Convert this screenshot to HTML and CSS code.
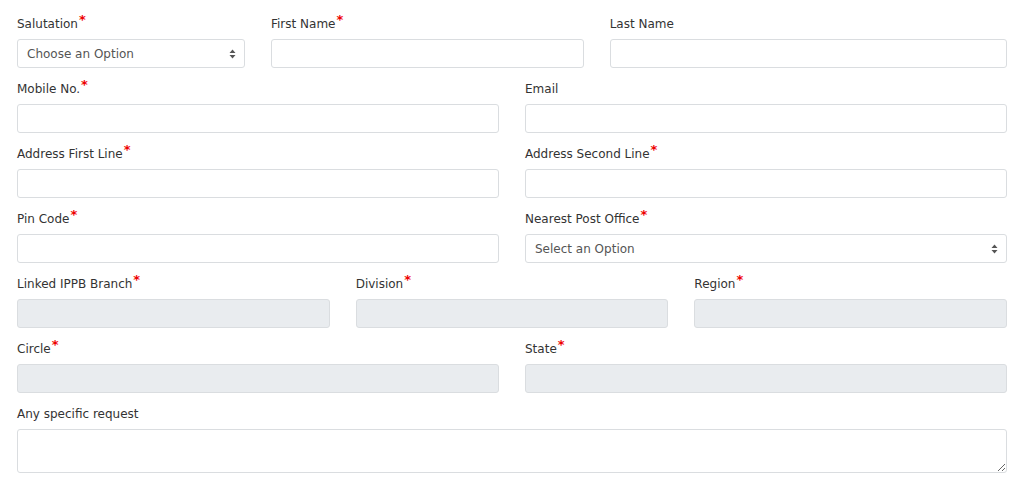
FILE: index.html
```html
<!DOCTYPE html>
<html lang="en">
<head>
  <meta charset="UTF-8">
  <meta name="viewport" content="width=device-width, initial-scale=1.0">
  <title>Service Request</title>
  <link rel="stylesheet" href="styles.css">
</head>
<body>
  <form class="request-form">
    <div class="row">
      <div class="field span-3">
        <label for="salutation">Salutation<span class="req">*</span></label>
        <div class="select-wrap">
          <select id="salutation">
            <option>Choose an Option</option>
            <option>Mr.</option>
            <option>Ms.</option>
            <option>Mrs.</option>
          </select>
          <svg class="caret" width="7" height="10" viewBox="0 0 7 10"><path d="M3.5 0.5 L6.5 4 H0.5 Z M3.5 9.5 L6.5 6 H0.5 Z" fill="#555"/></svg>
        </div>
      </div>
      <div class="field span-4">
        <label for="firstName">First Name<span class="req">*</span></label>
        <input type="text" id="firstName">
      </div>
      <div class="field span-5">
        <label for="lastName">Last Name</label>
        <input type="text" id="lastName">
      </div>
    </div>

    <div class="row">
      <div class="field span-6">
        <label for="mobile">Mobile No.<span class="req">*</span></label>
        <input type="text" id="mobile">
      </div>
      <div class="field span-6">
        <label for="email">Email</label>
        <input type="email" id="email">
      </div>
    </div>

    <div class="row">
      <div class="field span-6">
        <label for="address1">Address First Line<span class="req">*</span></label>
        <input type="text" id="address1">
      </div>
      <div class="field span-6">
        <label for="address2">Address Second Line<span class="req">*</span></label>
        <input type="text" id="address2">
      </div>
    </div>

    <div class="row">
      <div class="field span-6">
        <label for="pincode">Pin Code<span class="req">*</span></label>
        <input type="text" id="pincode">
      </div>
      <div class="field span-6">
        <label for="postOffice">Nearest Post Office<span class="req">*</span></label>
        <div class="select-wrap">
          <select id="postOffice">
            <option>Select an Option</option>
          </select>
          <svg class="caret" width="7" height="10" viewBox="0 0 7 10"><path d="M3.5 0.5 L6.5 4 H0.5 Z M3.5 9.5 L6.5 6 H0.5 Z" fill="#555"/></svg>
        </div>
      </div>
    </div>

    <div class="row">
      <div class="field span-4">
        <label for="branch">Linked IPPB Branch<span class="req">*</span></label>
        <input type="text" id="branch" disabled>
      </div>
      <div class="field span-4">
        <label for="division">Division<span class="req">*</span></label>
        <input type="text" id="division" disabled>
      </div>
      <div class="field span-4">
        <label for="region">Region<span class="req">*</span></label>
        <input type="text" id="region" disabled>
      </div>
    </div>

    <div class="row">
      <div class="field span-6">
        <label for="circle">Circle<span class="req">*</span></label>
        <input type="text" id="circle" disabled>
      </div>
      <div class="field span-6">
        <label for="state">State<span class="req">*</span></label>
        <input type="text" id="state" disabled>
      </div>
    </div>

    <div class="row">
      <div class="field span-12">
        <label for="request">Any specific request</label>
        <textarea id="request"></textarea>
      </div>
    </div>
  </form>
</body>
</html>
```

FILE: styles.css
```css
body {
  margin: 0;
  padding: 15px 17px 0;
  background-color: #fff;
  font-family: "DejaVu Sans", Verdana, sans-serif;
  font-size: 12px;
  color: #333;
}

.row {
  display: grid;
  grid-template-columns: repeat(12, 1fr);
  column-gap: 26px;
  margin-bottom: 12px;
}

.span-3 { grid-column: span 3; }
.span-4 { grid-column: span 4; }
.span-5 { grid-column: span 5; }
.span-6 { grid-column: span 6; }
.span-12 { grid-column: span 12; }

.field {
  display: flex;
  flex-direction: column;
}

label {
  display: block;
  height: 18px;
  line-height: 18px;
  margin-bottom: 6px;
  color: #333;
}

.req {
  color: #e00;
  font-weight: bold;
  font-size: 13px;
  line-height: 0;
  position: relative;
  top: -4px;
  margin-left: 1px;
}

input,
select,
textarea {
  box-sizing: border-box;
  width: 100%;
  height: 29px;
  margin: 0;
  padding: 0 9px;
  border: 1px solid #dadde0;
  border-radius: 3px;
  background-color: #fff;
  font-family: inherit;
  font-size: 12px;
  color: #555;
}

input:disabled {
  background-color: #e9ecef;
  border-color: #dadde0;
}

select {
  appearance: none;
  -webkit-appearance: none;
}

.select-wrap {
  position: relative;
}

.caret {
  position: absolute;
  right: 9px;
  top: 10px;
  pointer-events: none;
}

textarea {
  height: 44px;
  padding: 6px 9px;
  resize: vertical;
}
```
